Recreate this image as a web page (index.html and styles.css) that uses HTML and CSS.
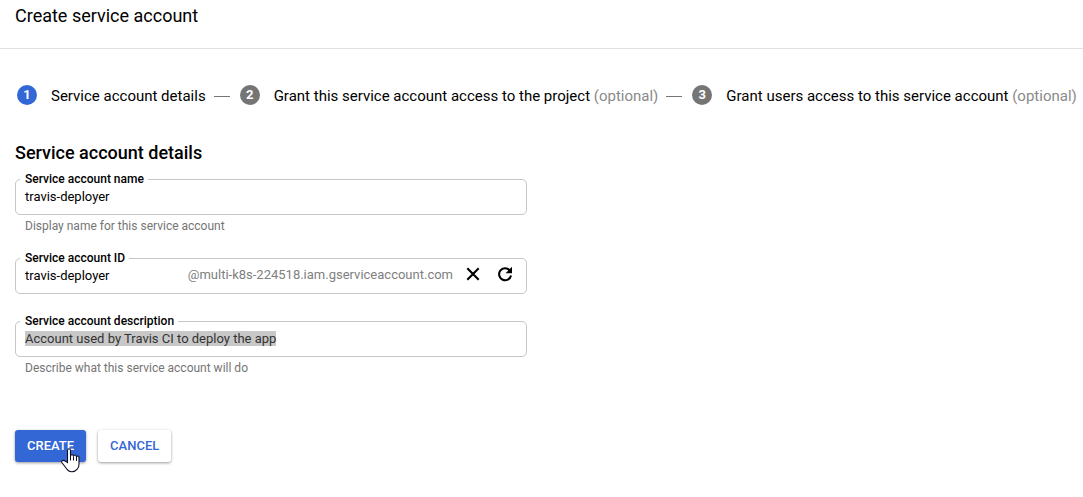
FILE: index.html
```html
<!DOCTYPE html>
<html lang="en">
<head>
<meta charset="utf-8">
<title>Create service account</title>
<link rel="stylesheet" href="styles.css">
</head>
<body>
<header class="header"><h1 class="title">Create service account</h1></header>
<nav class="stepper">
  <div class="step"><span class="num active">1</span><span class="step-text">Service account details</span></div>
  <i class="dash"></i>
  <div class="step"><span class="num">2</span><span class="step-text">Grant this service account access to the project <span class="optional">(optional)</span></span></div>
  <i class="dash"></i>
  <div class="step"><span class="num">3</span><span class="step-text">Grant users access to this service account <span class="optional">(optional)</span></span></div>
</nav>
<main class="content">
  <h2 class="heading">Service account details</h2>
  <form class="form">
    <div class="group g-name">
      <div class="field"><label class="label">Service account name</label><span class="value">travis-deployer</span></div>
      <p class="hint">Display name for this service account</p>
    </div>
    <div class="group g-id">
      <div class="field"><label class="label">Service account ID</label><span class="value">travis-deployer</span>
        <span class="suffix">@multi-k8s-224518.iam.gserviceaccount.com</span>
        <svg class="icon clear" width="18" height="18" viewBox="0 0 18 18"><path d="M3.3 3.3 14.7 14.7M14.7 3.3 3.3 14.7" fill="none" stroke="#000" stroke-width="2.1"/></svg>
        <svg class="icon" width="18" height="18" viewBox="0 0 18 18"><path d="M13.6 5.2A6 6 0 1 0 15 10.5" fill="none" stroke="#000" stroke-width="2.1"/><path d="M16 1.8V8.2H9.6Z"/></svg>
      </div>
    </div>
    <div class="group g-desc">
      <div class="field"><label class="label">Service account description</label><span class="value selected">Account used by Travis CI to deploy the app</span></div>
      <p class="hint">Describe what this service account will do</p>
    </div>
    <div class="actions">
      <button type="button" class="button primary">CREATE</button>
      <button type="button" class="button">CANCEL</button>
      <svg class="cursor" width="19" height="25" viewBox="0 0 19 25"><path d="M6.5 14.5V2.5Q6.5.7 8 .7T9.5 2.5V8.5Q9.5 6.7 11 6.7T12.5 8.5Q12.5 7 14 7T15.5 9Q15.5 8 16.8 8T18 10V16Q18 19.5 16.2 21.2C13.5 24.7 7.8 24.5 5.8 21L1 14.8Q0 13 1.5 12.6Q3 12 4.5 13.2Z" fill="#fff" stroke="#111122" stroke-width="1.1"/><path d="M9.5 8V12.5M12.5 8.5V12.5M15.5 9V13" fill="none" stroke="#111122"/></svg>
    </div>
  </form>
</main>
</body>
</html>
```
FILE: styles.css
```css
* { box-sizing: border-box; }
body { margin: 0; width: 1083px; height: 497px; overflow: hidden; background: #fff; color: #000; font-family: Roboto, sans-serif; }
h1, h2, p { margin: 0; }
.header { height: 49px; padding: 4px 15px 0; border-bottom: 1px solid #e0e0e0; }
.title { font-size: 18px; line-height: 24px; font-weight: 400; }
.stepper { display: flex; align-items: center; height: 20px; margin: 36px 0 0 17px; white-space: nowrap; }
.step { display: flex; align-items: center; gap: 14px; }
.num { flex: none; width: 20px; height: 20px; border-radius: 50%; background: #757575; color: #fff; font-size: 13px; font-weight: 700; line-height: 19px; text-align: center; }
.num.active { background: #3367d6; }
.step-text { padding-top: 2px; font-size: 15px; line-height: 20px; }
.optional { color: #8a8a8a; }
.dash { flex: none; width: 16px; height: 1px; margin: 2px 10px 0 8px; background: #757575; }
.content { padding: 36px 15px 0; }
.heading { font-size: 18px; line-height: 24px; font-weight: 500; }
.form { width: 512px; padding-top: 14px; }
.group { display: flex; flex-direction: column; }
.g-name { height: 79px; }
.g-id { height: 63px; }
.g-desc { height: 109px; }
.field { position: relative; display: flex; align-items: center; height: 36px; padding: 0 12px 0 9px; border: 1px solid #c6c6c6; border-radius: 5px; }
.label { position: absolute; left: 4px; top: -9px; padding: 0 4px 0 5px; background: #fff; font-size: 12px; line-height: 16px; font-weight: 500; white-space: nowrap; }
.value { margin-top: -2px; font-size: 13px; line-height: 15px; }
.selected { background: #c8c8c8; color: #333; }
.suffix { margin: -2px 11px 0 auto; color: #808080; font-size: 13px; line-height: 16px; }
.icon { flex: none; margin-top: -5px; }
.clear { margin-right: 14px; }
.hint { padding: 3px 10px 0; font-size: 12px; line-height: 16px; color: #757575; }
.actions { position: relative; display: flex; gap: 12px; }
.button { height: 32px; padding: 0 12px; border: 0; border-radius: 3px; background: #fff; color: #3367d6; font: 500 13px/32px Roboto, sans-serif; box-shadow: 0 1px 3px rgba(0,0,0,.4); }
.primary { background: #3367d6; color: #fff; }
.cursor { position: absolute; left: 46px; top: 18px; }
```
